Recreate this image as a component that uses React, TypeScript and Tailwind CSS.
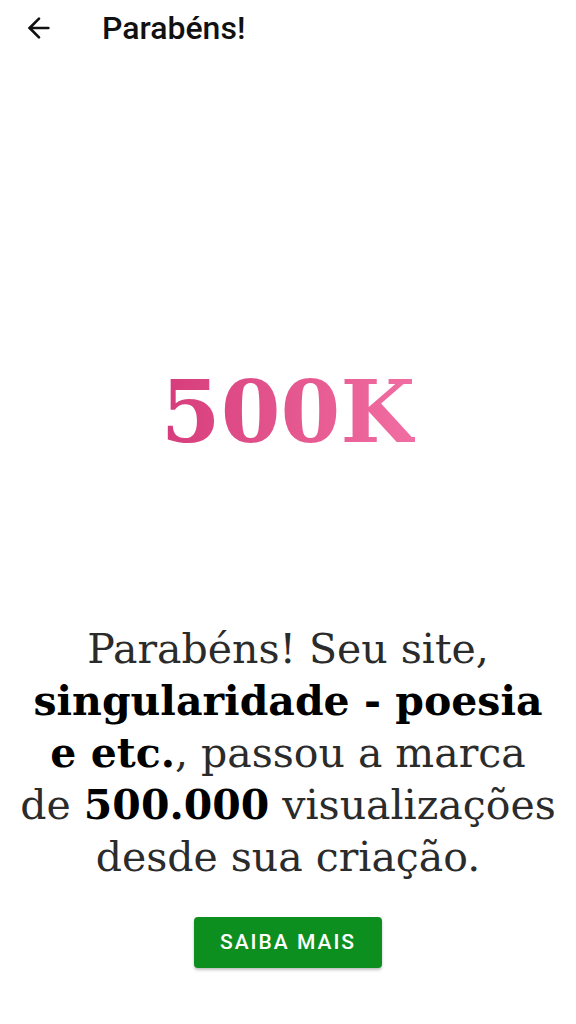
import React from 'react';
import { ArrowLeft } from 'lucide-react';

export default function App() {
  return (
    <div className="w-[576px] h-[1024px] bg-white flex flex-col overflow-hidden">
      <header className="h-[56px] flex items-center px-[23px] shrink-0">
        <button className="w-[32px] h-[32px] flex items-center justify-center text-[#111]">
          <ArrowLeft className="w-[32px] h-[32px]" strokeWidth={2} />
        </button>
        <h1 className="ml-[47px] text-[32px] leading-none font-medium text-[#111] font-['Roboto',sans-serif]">
          Parabéns!
        </h1>
      </header>

      <div className="mt-[313px] flex justify-center">
        <span className="text-[86px] leading-none font-bold font-['DejaVu_Serif',serif] bg-gradient-to-r from-[#d63b7b] to-[#f16ea2] bg-clip-text text-transparent">
          500K
        </span>
      </div>

      <p className="mt-[168px] px-2 text-center text-[41px] leading-[52px] text-[#2b2b2b] font-['DejaVu_Serif',serif]">
        Parabéns! Seu site,
        <br />
        <b className="text-black">singularidade - poesia</b>
        <br />
        <b className="text-black">e etc.</b>, passou a marca
        <br />
        de <b className="text-black">500.000</b> visualizações
        <br />
        desde sua criação.
      </p>

      <div className="mt-[34px] flex justify-center">
        <button className="w-[188px] h-[51px] rounded-[4px] bg-[#0d8f1f] text-white text-[21px] font-medium tracking-[2px] shadow-[0_2px_3px_rgba(0,0,0,0.25)] font-['Roboto',sans-serif]">
          SAIBA MAIS
        </button>
      </div>
    </div>
  );
}
